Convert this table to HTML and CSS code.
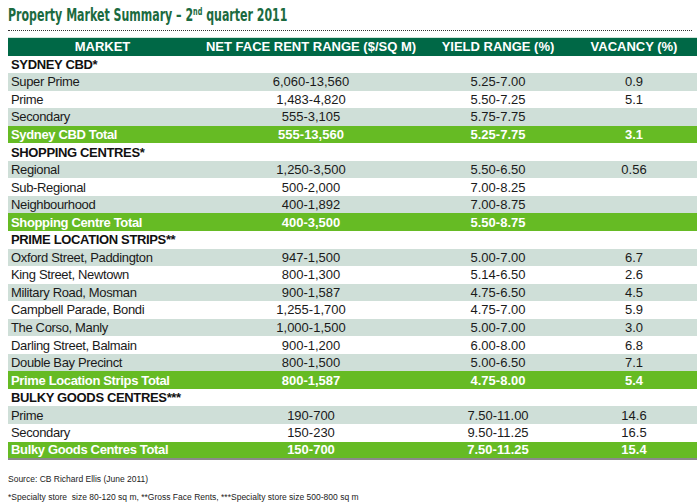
FILE: index.html
```html
<!DOCTYPE html>
<html>
<head>
<meta charset="utf-8">
<link rel="stylesheet" href="styles.css">
</head>
<body>
<div class="page">
  <h1 class="title"><span class="title-text">Property Market Summary – 2<sup>nd</sup> quarter 2011</span></h1>
  <div class="rule"></div>
  <table class="summary">
    <colgroup>
      <col class="c1"><col class="c2"><col class="c3"><col class="c4">
    </colgroup>
    <thead>
      <tr class="head"><th>MARKET</th><th>NET FACE RENT RANGE ($/SQ M)</th><th>YIELD RANGE (%)</th><th>VACANCY (%)</th></tr>
    </thead>
    <tbody>
      <tr class="sec"><td>SYDNEY CBD*</td><td></td><td></td><td></td></tr>
      <tr class="alt"><td>Super Prime</td><td>6,060-13,560</td><td>5.25-7.00</td><td>0.9</td></tr>
      <tr><td>Prime</td><td>1,483-4,820</td><td>5.50-7.25</td><td>5.1</td></tr>
      <tr class="alt"><td>Secondary</td><td>555-3,105</td><td>5.75-7.75</td><td></td></tr>
      <tr class="tot"><td>Sydney CBD Total</td><td>555-13,560</td><td>5.25-7.75</td><td>3.1</td></tr>

      <tr class="sec"><td>SHOPPING CENTRES*</td><td></td><td></td><td></td></tr>
      <tr class="alt"><td>Regional</td><td>1,250-3,500</td><td>5.50-6.50</td><td>0.56</td></tr>
      <tr><td>Sub-Regional</td><td>500-2,000</td><td>7.00-8.25</td><td></td></tr>
      <tr class="alt"><td>Neighbourhood</td><td>400-1,892</td><td>7.00-8.75</td><td></td></tr>
      <tr class="tot"><td>Shopping Centre Total</td><td>400-3,500</td><td>5.50-8.75</td><td></td></tr>

      <tr class="sec"><td>PRIME LOCATION STRIPS**</td><td></td><td></td><td></td></tr>
      <tr class="alt"><td>Oxford Street, Paddington</td><td>947-1,500</td><td>5.00-7.00</td><td>6.7</td></tr>
      <tr><td>King Street, Newtown</td><td>800-1,300</td><td>5.14-6.50</td><td>2.6</td></tr>
      <tr class="alt"><td>Military Road, Mosman</td><td>900-1,587</td><td>4.75-6.50</td><td>4.5</td></tr>
      <tr><td>Campbell Parade, Bondi</td><td>1,255-1,700</td><td>4.75-7.00</td><td>5.9</td></tr>
      <tr class="alt"><td>The Corso, Manly</td><td>1,000-1,500</td><td>5.00-7.00</td><td>3.0</td></tr>
      <tr><td>Darling Street, Balmain</td><td>900-1,200</td><td>6.00-8.00</td><td>6.8</td></tr>
      <tr class="alt"><td>Double Bay Precinct</td><td>800-1,500</td><td>5.00-6.50</td><td>7.1</td></tr>
      <tr class="tot"><td>Prime Location Strips Total</td><td>800-1,587</td><td>4.75-8.00</td><td>5.4</td></tr>

      <tr class="sec"><td>BULKY GOODS CENTRES***</td><td></td><td></td><td></td></tr>
      <tr class="alt"><td>Prime</td><td>190-700</td><td>7.50-11.00</td><td>14.6</td></tr>
      <tr><td>Secondary</td><td>150-230</td><td>9.50-11.25</td><td>16.5</td></tr>
      <tr class="tot last"><td>Bulky Goods Centres Total</td><td>150-700</td><td>7.50-11.25</td><td>15.4</td></tr>
    </tbody>
  </table>
  <p class="note source">Source: CB Richard Ellis (June 2011)</p>
  <p class="note">*Specialty store&nbsp; size 80-120 sq m, **Gross Face Rents, ***Specialty store size 500-800 sq m</p>
</div>
</body>
</html>
```

FILE: styles.css
```css
html, body {
  margin: 0;
  padding: 0;
  background: #ffffff;
}

.page {
  width: 700px;
  height: 502px;
  padding: 0 3px 0 8px;
  box-sizing: border-box;
  overflow: hidden;
}

.title {
  margin: 0;
  padding-top: 5px;
  height: 21px;
  font-family: "Liberation Sans Narrow", "DejaVu Sans Condensed", sans-serif;
  font-weight: bold;
  font-size: 17px;
  line-height: 21px;
  color: #1b6a40;
  white-space: nowrap;
}

.title-text {
  display: inline-block;
  transform: scaleX(0.72);
  transform-origin: left center;
}

.title sup {
  font-size: 10px;
  line-height: 0;
  vertical-align: 6px;
}

.rule {
  width: 684px;
  margin-top: 4px;
  border-top: 1px dotted #333333;
}

.summary {
  margin-top: 6px;
  width: 689px;
  border-collapse: collapse;
  table-layout: fixed;
  font-family: "Liberation Sans", Arial, sans-serif;
  font-size: 13px;
  color: #1a1a1a;
  border-top: 1px solid #cfe3d8;
}

.c1 { width: 189px; }
.c2 { width: 228px; }
.c3 { width: 146px; }
.c4 { width: 126px; }

.summary th,
.summary td {
  padding: 0;
  text-align: center;
  white-space: nowrap;
  line-height: 15px;
}

.summary th:first-child,
.summary td:first-child {
  text-align: left;
  padding-left: 3px;
}

.summary th:first-child {
  text-align: center;
  padding-left: 0;
}

.summary tbody td:first-child {
  letter-spacing: -0.35px;
}

.sec td:first-child,
.tot td:first-child {
  letter-spacing: 0;
}

.head {
  height: 18px;
  background: #006846;
  color: #ffffff;
  font-weight: bold;
}

.summary tbody tr {
  height: 17.55px;
}

.alt {
  background: #cfdfd8;
}

.sec td {
  font-weight: bold;
  color: #111111;
}

.tot {
  background: #66bb24;
  color: #ffffff;
  font-weight: bold;
}

.last {
  border-bottom: 2px solid #8a8a8a;
}

.note {
  margin: 0;
  font-family: "Liberation Sans", Arial, sans-serif;
  font-size: 8.5px;
  line-height: 10px;
  color: #222222;
}

.source {
  margin-top: 14px;
  margin-bottom: 8px;
}
```
